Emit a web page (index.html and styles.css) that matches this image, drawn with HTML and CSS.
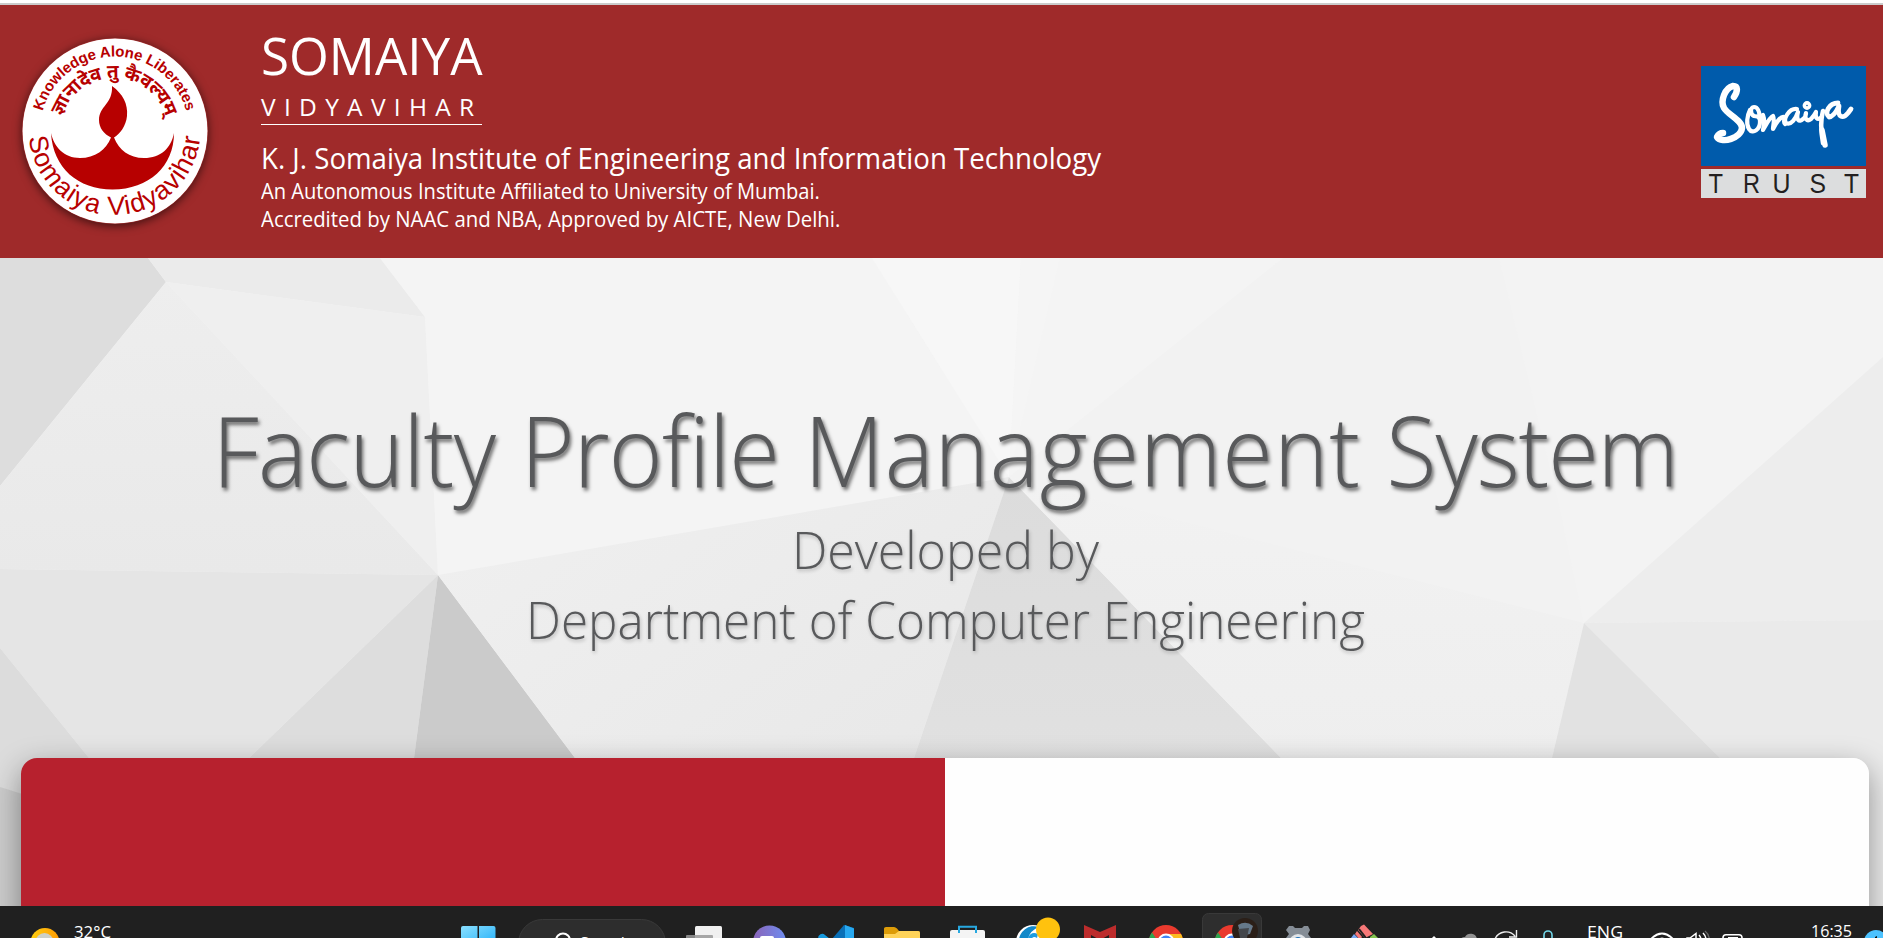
FILE: index.html
```html
<!DOCTYPE html>
<html lang="en">
<head>
<meta charset="utf-8">
<title>Faculty Profile Management System</title>
<link rel="stylesheet" href="styles.css">
</head>
<body>
<div class="screen">
  <header class="header">
    <svg class="crest" viewBox="0 0 186 186" width="186" height="186">
      <defs>
        <path id="arcTop" d="M18 93 A74.500 74.500 0 0 1 167 93"/>
        <path id="arcMid" d="M38 94 A54 54 0 0 1 146 94"/>
        <path id="arcBottom" d="M6.500 91 A86 86 0 0 0 178.500 91"/>
      </defs>
      <circle cx="93" cy="93" r="92.500" fill="#fff"/>
      <g fill="#b70000">
        <text class="motto"><textPath href="#arcTop" startOffset="50%" text-anchor="middle" textLength="194">Knowledge Alone Liberates</textPath></text>
        <text class="sanskrit"><textPath href="#arcMid" startOffset="50%" text-anchor="middle" textLength="138">ज्ञानादेव तु कैवल्यम्</textPath></text>
        <text class="crest-name"><textPath href="#arcBottom" startOffset="50%" text-anchor="middle" textLength="253">Somaiya Vidyavihar</textPath></text>
        <path d="M90 48 C101 56 106 66 105 78 C104 88 98 96 92 99.500 C97 112 107 120 122 120 C139 120 149 110 152 95 C152 128 127 151.500 90.500 151.500 C56 151.500 31 130 29 95 C32 109 42 120 58 120 C73 120 84 112 89 99.500 C82 96 77 90 77 82 C77 68 91 66 90 48Z"/>
      </g>
    </svg>
    <div class="institute">
      <div class="brand"><span class="fit f1">SOMAIYA</span></div>
      <div class="sub"><span class="fit f2">VIDYAVIHAR</span></div>
      <div class="college"><span class="fit f3">K. J. Somaiya Institute of Engineering and Information Technology</span></div>
      <div class="note"><span class="fit f4">An Autonomous Institute Affiliated to University of Mumbai.</span></div>
      <div class="note"><span class="fit f5">Accredited by NAAC and NBA, Approved by AICTE, New Delhi.</span></div>
    </div>
    <svg class="trust" viewBox="0 0 165 132" width="165" height="132">
      <rect width="165" height="100" fill="#005bab"/>
      <rect y="103" width="165" height="29" fill="#dcddde"/>
      <g fill="none" stroke="#fff" stroke-width="4.200" stroke-linecap="round" stroke-linejoin="round">
        <path stroke-width="6.500" d="M33 31 C37 25 37 20 32 20 C24 22 19 35 23 42 C27 49 41 54 41 62 C40 72 21 78 16 71 C17 69 19 67 22 67"/>
        <path d="M49 44 C46 50 45 58 48 63 C52 69 59 63 59 56 C59 49 58 41 53 41 C49 41 49 48 53 50 L59 51"/>
        <path d="M58 52 L62 49 C64 54 63 60 62 64 C66 57 69 51 72 50 C74 54 72 59 72 63 C75 57 80 50 83 51 C84 54 82 57 84 58"/>
        <path d="M96 43 C88 42 82 53 85 57 C90 60 95 52 97 46 C95 54 98 57 102 53 C105 51 105 49 105 47 C103 53 106 56 110 53 C113 50 114 48 115 46 C114 52 116 55 121 51"/>
        <path d="M122 45 C119 55 120 66 122 77" stroke-width="4.500"/><path d="M121 64 L124 79" stroke-width="5.500"/>
        <path d="M137 37 C128 37 123 47 128 51 C133 51 136 44 138 40 C136 52 142 53 147 47 L150 43" stroke-width="4.800"/>
        <circle cx="106" cy="39.500" r="2.600" stroke-width="3.600"/>
      </g>
      <g class="trust-word"><text x="7.500" y="127" textLength="14.500" lengthAdjust="spacingAndGlyphs">T</text><text x="42" y="127" textLength="17" lengthAdjust="spacingAndGlyphs">R</text><text x="71.500" y="127" textLength="18" lengthAdjust="spacingAndGlyphs">U</text><text x="108.500" y="127" textLength="16.500" lengthAdjust="spacingAndGlyphs">S</text><text x="143" y="127" textLength="15" lengthAdjust="spacingAndGlyphs">T</text></g>
    </svg>
  </header>
  <main class="hero">
    <svg class="facets" viewBox="0 258 1883 648" width="1883" height="648" preserveAspectRatio="none">
      <defs>
        <linearGradient id="g1" x1="0" y1="0" x2="0" y2="1"><stop offset="0" stop-color="#f2f2f2"/><stop offset="1" stop-color="#ececec"/></linearGradient>
        <linearGradient id="g2" x1="0" y1="0" x2="0" y2="1"><stop offset="0" stop-color="#eeeeee"/><stop offset="1" stop-color="#e9e9e9"/></linearGradient>
        <linearGradient id="g3" x1="0" y1="0" x2="0" y2="1"><stop offset="0" stop-color="#dcdcdc"/><stop offset="1" stop-color="#e3e3e3"/></linearGradient>
        <linearGradient id="g4" x1="0" y1="0" x2="1" y2="1"><stop offset="0" stop-color="#f0f0f0"/><stop offset="1" stop-color="#e6e6e6"/></linearGradient>
      </defs>
      <rect y="258" width="1883" height="648" fill="#f3f3f3"/>
      <path fill="#dddddd" d="M0 258H148L166 282L0 486Z"/>
      <path fill="#ebebeb" d="M148 258H380L425 317L166 282Z"/>
      <path fill="url(#g2)" d="M166 282L0 486V569L438 575Z"/>
      <path fill="#efefef" d="M166 282L425 317L438 575Z"/>
      <path fill="#f4f4f4" d="M380 258H872L1009 477L438 575L425 317Z"/>
      <path fill="#f7f7f7" d="M872 258H1021L1009 477Z"/>
      <path fill="#f5f5f5" d="M1021 258H1283L1009 477Z"/>
      <path fill="#f3f3f3" d="M1060 258H1283L1009 477Z" opacity=".5"/>
      <path fill="#f2f2f2" d="M1283 258H1499L1560 510L1584 623L1009 477Z"/>
      <path fill="#e5e5e5" d="M0 569L438 575L249 758V906H150L89 758L0 648Z"/>
      <path fill="#dcdcdc" d="M0 648L89 758V830L0 800Z"/>
      <path fill="#cccccc" d="M0 787L89 815V906H0Z"/>
      <path fill="#dddddd" d="M438 575L249 758V906H400L414 758Z"/>
      <path fill="#cbcbcb" d="M438 575L414 758V906H690L575 758Z"/>
      <path fill="url(#g4)" d="M438 575L1009 477L914 758V906H690L575 758Z"/>
      <path fill="url(#g3)" d="M1009 477L914 758V906H1450L1281 758Z"/>
      <path fill="url(#g1)" d="M1009 477L1584 623L1552 758V906H1450L1281 758Z"/>
      <path fill="#ededed" d="M1584 623L1883 357V620Z"/>
      <path fill="#eaeaea" d="M1584 623L1883 620V906H1850L1720 758Z"/>
      <path fill="#e2e2e2" d="M1584 623L1552 758V906H1850L1720 758Z"/>
    </svg>
    <div class="titles">
      <h1><span class="fit f6"><span class="w1">Faculty</span> <span class="w2">Profile</span> <span class="w3">Management</span> <span class="w4">System</span></span></h1>
      <p><span class="fit f7">Developed by</span></p>
      <p><span class="fit f8">Department of Computer Engineering</span></p>
    </div>
    <section class="card"><div class="card-red"></div><div class="card-white"></div></section>
  </main>
  <footer class="taskbar">
    <svg width="1883" height="32" viewBox="0 0 1883 32">
      <defs>
        <linearGradient id="win" x1="0" y1="0" x2="1" y2="1"><stop offset="0" stop-color="#8ae0ff"/><stop offset="1" stop-color="#22aef8"/></linearGradient>
        <linearGradient id="team" x1="0" x2="1"><stop offset="0" stop-color="#8a64b8"/><stop offset="1" stop-color="#6f8df0"/></linearGradient>
        <linearGradient id="sun" x1="0" x2="1"><stop offset="0" stop-color="#ffcf10"/><stop offset="1" stop-color="#ff9b05"/></linearGradient>
      </defs>
      <circle cx="45" cy="36.500" r="14.500" fill="url(#sun)"/><circle cx="44.500" cy="36" r="9" fill="#cdd0c8"/>
      <text x="74" y="31.500" class="tray" textLength="37" lengthAdjust="spacingAndGlyphs">32°C</text>
      <path fill="url(#win)" d="M461 22Q461 20 463 20H477.500V40H461ZM479 20H493.500Q495.500 20 495.500 22V40H479Z"/>
      <rect x="518.500" y="13.500" width="147" height="48" rx="24" fill="#2d2d2d" stroke="#393939"/>
      <circle cx="563" cy="34.500" r="7" fill="none" stroke="#fff" stroke-width="2"/>
      <text x="580" y="43" class="search">Search</text>
      <rect x="695" y="20" width="27" height="20" rx="1.500" fill="#f0f0f0"/><rect x="686" y="29" width="27" height="12" rx="1" fill="#999" opacity=".85"/>
      <circle cx="769.500" cy="36" r="16.500" fill="url(#team)"/><rect x="760" y="30" width="14" height="9" rx="2" fill="#fff"/>
      <path fill="#0a70b8" d="M844 19L854 22V40H826Z"/><path fill="#28a9f0" d="M845 19L854 22.500V40H845Z"/><path fill="#169ade" d="M818.500 30Q822 26 825 29L834 36V40H826L818 33Z"/>
      <path fill="#dd9c08" d="M884 22.500Q884 21 886 21H894Q895.500 21 897 22.500L899 25H918Q920 25 920 27V40H884Z"/><path fill="#ffd359" d="M884 28H895L899 25H918Q920 25 920 27V40H884Z"/>
      <path fill="#f4f4f4" d="M950 26Q950 24 952 24H983Q985 24 985 26V40H950Z"/><path d="M959 27V20.800H976V27" fill="none" stroke="#27a8e0" stroke-width="2"/>
      <circle cx="1033" cy="36" r="17" fill="#fff"/><path d="M1019 36A15 15 0 0 1 1039 21Q1029 25 1028 34V40H1018Z" fill="#1188c9"/><path d="M1028 32Q1031 25 1038 28L1037 32Q1033 29 1031 34Z" fill="#1c9ce0"/>
      <circle cx="1048" cy="23.500" r="12" fill="#ffc20e"/>
      <path fill="#bd2c2c" d="M1084 19L1100 26L1116 19V40H1109V29L1100 34L1091 29V40H1084Z"/>
      <g id="chrome"><circle cx="1166" cy="36" r="17" fill="#ea3a2e"/><path d="M1152 26.500L1161 40H1149V34Q1149 30 1152 26.500Z" fill="#2da44f"/><path d="M1166 28H1181Q1183 31 1183 36V40H1166Z" fill="#fbbc20"/><circle cx="1166" cy="36" r="8.500" fill="#fff"/><circle cx="1166" cy="36" r="6.500" fill="#4285f4"/></g>
      <rect x="1202.500" y="7.500" width="59" height="50" rx="6" fill="#2e2e2e" stroke="#393939"/>
      <use href="#chrome" x="66"/>
      <circle cx="1245" cy="25" r="13" fill="#2b1f18"/><path d="M1238 19Q1246 14 1253 20L1250 28L1241 30Z" fill="#66798a"/><path d="M1238 23L1249 22L1247 32H1240Z" fill="#44474c"/>
      <path fill="#858d96" d="M1289 20H1293L1295 22H1302L1304 20H1308L1310 24L1308 28L1311 32V40H1286V32L1289 28L1286 24Z"/><circle cx="1298" cy="37" r="9" fill="#dfe3e7"/><circle cx="1298" cy="36" r="5" fill="#1d70b8"/>
      <path fill="#f77878" d="M1361 20L1364 18.500L1373 28L1365 32L1358 24Z"/><path fill="#f77878" d="M1357 25L1362 31L1360 34L1355 28Z"/><path fill="#79a7f5" d="M1354 28L1358 32V36H1348Z"/><path fill="#85c450" d="M1374 28L1380 34H1370V31Z"/><path d="M1359 23L1366 32" stroke="#222" stroke-width="2"/>
      <path d="M1429 36L1434 31L1439 36" fill="none" stroke="#fff" stroke-width="1.500"/>
      <path d="M1460 36Q1460 31 1465 31A6.500 6.500 0 0 1 1477 33L1480 36Z" fill="#929292"/>
      <path d="M1495 33A12 12 0 0 1 1515 30M1516.500 24V31H1509" fill="none" stroke="#eee" stroke-width="1.400"/>
      <rect x="1544" y="25" width="8" height="16" rx="4" fill="none" stroke="#73d8ea" stroke-width="1.600"/>
      <text x="1587" y="31.500" class="tray" textLength="36" lengthAdjust="spacingAndGlyphs">ENG</text>
      <path d="M1651 33Q1662 22 1673 33" fill="none" stroke="#fff" stroke-width="1.800"/><path d="M1656 36Q1662 29 1668 36" fill="none" stroke="#fff" stroke-width="1.800"/>
      <path d="M1687 32H1690L1696 27.500V36H1687ZM1699 29Q1701 31 1701 34M1703 27Q1706 30 1706 34" fill="none" stroke="#fff" stroke-width="1.500"/><path d="M1705 25Q1709 28 1709.500 34" fill="none" stroke="#666" stroke-width="1.300"/>
      <rect x="1723" y="28.800" width="19" height="12" rx="3" fill="none" stroke="#fff" stroke-width="1.600"/><path d="M1728 31.500H1738" stroke="#fff"/>
      <text x="1811" y="30.500" class="tray" textLength="41" lengthAdjust="spacingAndGlyphs">16:35</text>
      <circle cx="1876" cy="36" r="12" fill="#4cc2ff"/><path d="M1875 31l2-1v3h-2z" fill="#111"/>
    </svg>
  </footer>
</div>
</body>
</html>
```
FILE: styles.css
```css
* { box-sizing: border-box; }
body { margin: 0; background: #fff; font-family: "Open Sans", "Noto Sans", sans-serif; }
.screen { width: 1883px; height: 938px; overflow: hidden; display: flex; flex-direction: column; }
.header { flex: none; height: 258px; border-top: 3px solid #fff; background: #9f2a2a; box-shadow: inset 0 2px #cbcbcb; display: flex; align-items: flex-start; padding: 0 17px 0 22px; color: #fff; }
.crest { flex: none; margin-top: 35px; border-radius: 50%; box-shadow: 0 2px 10px rgba(0,0,0,.6); }
.motto { font: bold 15px "Liberation Sans", sans-serif; }
.sanskrit { font: bold 19px "Noto Sans Devanagari", "Noto Sans", sans-serif; }
.crest-name { font: 26.500px "Liberation Sans", sans-serif; }
.institute { flex: 1; margin-left: 53px; padding-top: 16px; white-space: nowrap; }
.fit { display: inline-block; transform-origin: 0 50%; }
.f1 { transform: scaleX(.984); }
.f2 { letter-spacing: 8.300px; }
.f3 { transform: scaleX(.970); }
.f4 { transform: scaleX(.958); }
.f5 { transform: scaleX(.970); }
.f6 { transform: scaleX(.938); }
.f7 { transform: scaleX(.963); }
.f8 { transform: scaleX(.950); }
.w1 { letter-spacing: -.55px; }
.w2 { letter-spacing: -.73px; }
.w3 { letter-spacing: 1.15px; }
.w4 { letter-spacing: -1.100px; }
.brand { font-size: 52px; line-height: 72px; height: 72px; }
.sub { font-size: 24.500px; line-height: 31px; height: 34px; width: 221px; border-bottom: 1px solid #fff; }
.college { font-size: 28.500px; line-height: 40px; margin-top: 13px; }
.note { font-size: 21px; line-height: 28px; position: relative; top: -1px; }
.trust { flex: none; margin-top: 63px; }
.trust-word { font: 27px "Liberation Sans", sans-serif; fill: #231f20; }
.hero { position: relative; flex: none; height: 648px; padding: 0 14px 0 21px; }
.facets { position: absolute; left: 0; top: 0; }
.titles { position: relative; height: 500px; padding-top: 126px; text-align: center; color: #58595b; white-space: nowrap; }
.titles h1, .titles p { margin: 0; font-weight: 300; }
.titles .fit { transform-origin: 50% 50%; }
.titles h1 { font-size: 98px; line-height: 130px; text-shadow: 2px 3px 4px rgba(0,0,0,.55); word-spacing: 1.500px; }
.titles p { font-size: 52px; line-height: 70px; text-shadow: 1px 2px 4px rgba(0,0,0,.22); }
.card { position: relative; height: 180px; display: flex; border-radius: 16px; overflow: hidden; box-shadow: 0 10px 30px rgba(0,0,0,.38); }
.card-red { width: 924px; background: #b7212e; }
.card-white { flex: 1; background: #fefefe; }
.taskbar { position: relative; flex: none; height: 32px; background: #202020; overflow: hidden; }
.tray { font: 16.500px "Open Sans", sans-serif; fill: #fff; }
.search { font: 16px "Open Sans", sans-serif; fill: #fff; }
```
